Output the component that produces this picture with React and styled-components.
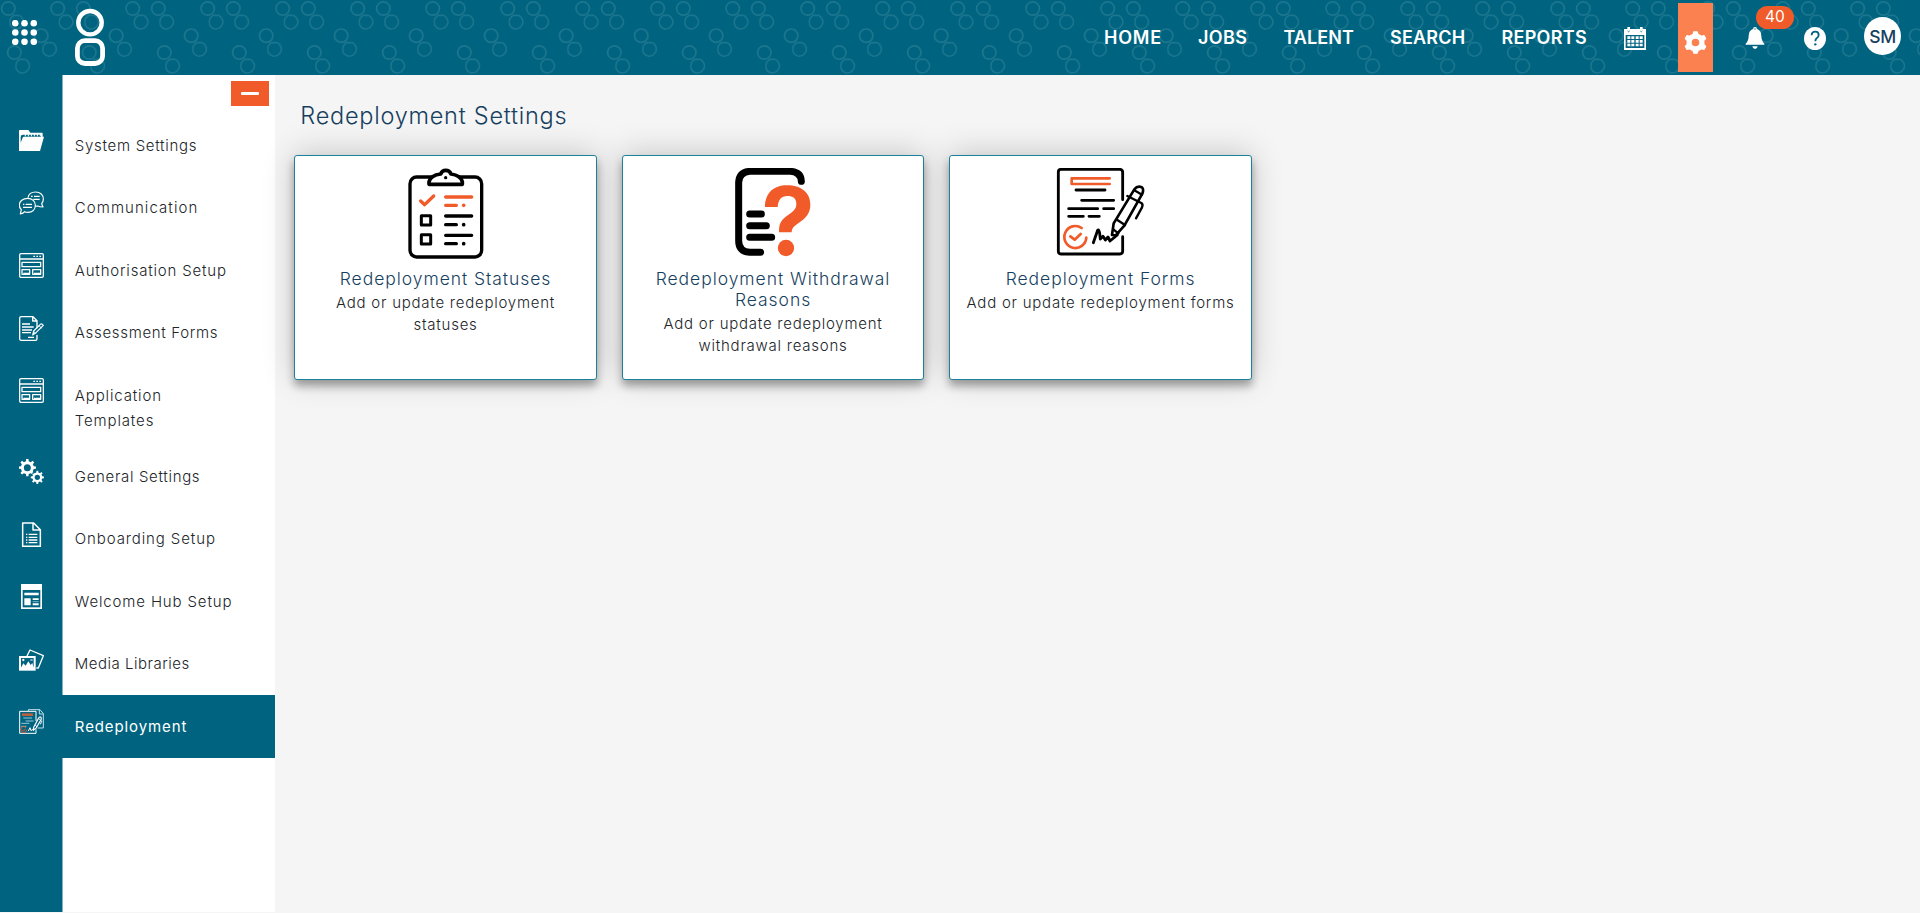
import React from "react";
import styled, { createGlobalStyle, css } from "styled-components";

const teal = "#006480";
const orange = "#f15a29";

const GlobalStyle = createGlobalStyle`
  *, *::before, *::after { box-sizing: border-box; }
  html, body { margin: 0; height: 100%; background: #f5f5f5; }
  body { font-family: Inter, "Liberation Sans", sans-serif; color: #212529; overflow: hidden; }
  svg { display: block; flex: none; }
`;

const Page = styled.div`
  display: flex;
  flex-direction: column;
  height: 912px;
`;

const Header = styled.header`
  position: relative;
  display: flex;
  align-items: flex-start;
  height: 75px;
  flex: none;
  background: ${teal};
  padding-left: 12px;
  padding-right: 19px;
`;

const HeaderPattern = styled.svg`
  position: absolute;
  inset: 0;
  width: 100%;
  height: 100%;
`;

const AppsButton = styled.a`
  position: relative;
  margin-top: 20px;
`;

const Logo = styled.a`
  position: relative;
  margin: 8px 0 0 38px;
`;

const Nav = styled.nav`
  position: relative;
  display: flex;
  flex: 1;
  justify-content: flex-end;
  gap: 36px;
  margin-right: 37px;
  padding-top: 25px;
`;

const NavLink = styled.a`
  font-size: 18px;
  line-height: 26px;
  font-weight: 600;
  color: #fff;
  letter-spacing: ${(p) => p.$spacing}px;
`;

const Tools = styled.div`
  position: relative;
  display: flex;
  align-items: flex-start;
`;

const Tool = styled.a`
  position: relative;
  display: flex;
  margin-top: 27px;
`;

const CalendarTool = styled(Tool)`
  margin-right: 32px;
`;

const BellTool = styled(Tool)`
  margin-right: 39px;
`;

const HelpTool = styled(Tool)`
  margin-right: 38px;
`;

const ActiveTool = styled.a`
  display: flex;
  justify-content: center;
  width: 35px;
  height: 69px;
  margin: 3px 32px 0 0;
  padding-top: 28px;
  background: #fb8151;
`;

const Badge = styled.span`
  position: absolute;
  left: 11px;
  top: -21px;
  width: 38px;
  height: 23px;
  border-radius: 12px;
  background: ${orange};
  color: #fff;
  font-size: 15.5px;
  line-height: 22px;
  text-align: center;
`;

const Avatar = styled.a`
  width: 37px;
  height: 38px;
  margin-top: 17px;
  border-radius: 50%;
  background: #fff;
  color: #173f5f;
  font-size: 17.5px;
  line-height: 40px;
  font-weight: 500;
  letter-spacing: -0.3px;
  text-align: center;
`;

const Body = styled.div`
  display: flex;
  flex: 1;
`;

const Sidebar = styled.aside`
  width: 275px;
  flex: none;
  background: linear-gradient(to right, ${teal} 62px, #7fb1bf 62px, #7fb1bf 63px, #fff 63px);
`;

const SidebarTop = styled.div`
  display: flex;
  justify-content: flex-end;
  height: 39px;
  padding: 6px 6px 0 0;
`;

const CollapseButton = styled.button`
  display: flex;
  align-items: center;
  justify-content: center;
  width: 38px;
  height: 25px;
  padding: 0;
  border: 0;
  background: ${orange};

  &::before {
    content: "";
    width: 18px;
    height: 3px;
    border-radius: 1px;
    background: #fff;
  }
`;

const Menu = styled.ul`
  margin: 0;
  padding: 0;
  list-style: none;
`;

const MenuItem = styled.li`
  display: flex;
  align-items: flex-start;
  height: ${(p) => (p.$tall ? 81 : 62.5)}px;
  ${(p) =>
    p.$active &&
    css`
      background: ${teal};
      color: #fff;
      font-weight: 400;
    `}
`;

const MenuIcon = styled.span`
  width: 62.5px;
  flex: none;
  padding: 14px 0 0 19px;
`;

const MenuLabel = styled.span`
  flex: 1;
  padding: 18.75px 10px 0 12.3px;
  font-size: 15px;
  line-height: 25px;
  font-weight: ${(p) => (p.$active ? 400 : 300)};
  letter-spacing: ${(p) => p.$spacing}px;
  white-space: pre-line;
`;

const Main = styled.main`
  flex: 1;
  padding: 26px 19px 0 19.3px;
`;

const PageTitle = styled.h1`
  margin: 0 0 24px 6px;
  font-size: 23.5px;
  line-height: 30px;
  font-weight: 300;
  letter-spacing: 0.75px;
  color: #173f5f;
`;

const Cards = styled.div`
  display: grid;
  grid-template-columns: repeat(3, 302.5px);
  gap: 25px;
`;

const Card = styled.a`
  display: flex;
  flex-direction: column;
  align-items: center;
  height: 225px;
  padding: 12px 8px;
  border: 1px solid #1c819b;
  border-radius: 3px;
  background: #fff;
  box-shadow: 0 6px 8px rgba(0, 0, 0, 0.33), 0 -2px 32px rgba(0, 0, 0, 0.19);
  text-align: center;
`;

const CardTitle = styled.h2`
  margin: 9px 0 3px;
  font-size: 17.5px;
  line-height: 21px;
  font-weight: 300;
  letter-spacing: 0.95px;
  color: #173f5f;
  white-space: pre-line;
`;

const CardText = styled.p`
  margin: 0;
  font-size: 15px;
  line-height: 22px;
  font-weight: 300;
  letter-spacing: 0.76px;
  white-space: pre-line;
`;

const squarish = "M-3.5 -7.2 L1.5 -7.4 Q3.5 -7.4 5 -5.6 L7 -2.5 Q7.8 0 6.8 2.5 L4 6 Q1 7.8 -2 7.3 Q-5.5 6.4 -7 3 Q-7.8 -1 -6.6 -4 Z";

function RingsPattern() {
  const pairs = [[8.3, 8.5], [57.7, 8.5], [41.2, 35.7], [14.3, 52.5]];
  return (
    <HeaderPattern aria-hidden="true">
      <defs>
        <pattern id="rings" width="75" height="75" patternUnits="userSpaceOnUse">
          <g fill="none" stroke="#fff" strokeOpacity="0.11" strokeWidth="1.7">
            {pairs.map(([x, y]) => (
              <g key={x}>
                <circle cx={x} cy={y} r="6.7" />
                <path d={squarish} transform={`translate(${x + 8.4} ${y + 13.6}) scale(.93)`} />
              </g>
            ))}
            <path d={squarish} transform="translate(-8.9 22.1) scale(.93)" />
          </g>
        </pattern>
      </defs>
      <rect width="100%" height="100%" fill="url(#rings)" />
    </HeaderPattern>
  );
}

function gearPath(cx, cy, outer, inner, teeth, wide = 0.27, narrow = 0.17) {
  const step = (Math.PI * 2) / teeth;
  const pts = [];
  for (let i = 0; i < teeth; i++) {
    const a = i * step - Math.PI / 2;
    [[-wide, inner], [-narrow, outer], [narrow, outer], [wide, inner]].forEach(([f, r]) => {
      pts.push(`${(cx + Math.cos(a + f * step) * r).toFixed(2)} ${(cy + Math.sin(a + f * step) * r).toFixed(2)}`);
    });
  }
  return `M${pts.join("L")}Z`;
}

function circlePath(cx, cy, r) {
  return `M${cx - r} ${cy}a${r} ${r} 0 1 0 ${2 * r} 0a${r} ${r} 0 1 0 ${-2 * r} 0Z`;
}

const Glyph = ({ children }) => (
  <svg width="25" height="25" viewBox="0 0 75 75" fill="none" stroke="#fff" strokeWidth="4" strokeLinejoin="round">
    {children}
  </svg>
);

const FolderIcon = () => (
  <Glyph>
    <path d="M0 8Q0 6 2 6H28L34 14H69Q71 14 71 17V26H75L63 69H0Z" fill="#fff" stroke="none" />
    <path d="M12 27L5 44V27Q5 20 12 20H66V26H15Q13 26 12 27Z" fill={teal} stroke="none" />
    <path d="M19 17V25M28 17V25M37 17V25M46 17V25M55 17V25M64 17V25" strokeWidth="3" />
  </Glyph>
);

const ChatIcon = () => (
  <Glyph>
    <g strokeWidth="3.5">
      <path d="M27 20C29 8 37 3 50 3C64 3 73 12 73 24C73 31 71 35 68 38L72 48C64 48 60 47 56 45L49 46" />
      <path d="M26 22C40 22 49 31 49 43C49 56 40 64 27 64C22 64 20 64 17 62C14 66 10 68 4 69L7 56C3 52 1 48 1 42C1 30 12 22 26 22Z" />
      <path d="M36 16H41M45 16H62M43 25H62M12 40H16M20 40H39M12 49H39" />
    </g>
  </Glyph>
);

const FormLayoutIcon = () => (
  <Glyph>
    <g strokeWidth="3.8">
      <rect x="2" y="2" width="71" height="71" rx="4" />
      <path d="M2 18H73M43 10H48M52 10H57M61 10H66" />
      <rect x="9" y="28" width="56" height="13" />
      <rect x="9" y="50" width="23" height="14" />
      <rect x="41" y="50" width="24" height="14" />
      <path d="M13 62H31M45 62H64" strokeWidth="5" />
    </g>
  </Glyph>
);

const AssessmentIcon = () => (
  <Glyph>
    <path d="M54 37V14L42 2H7Q2 2 2 7V68Q2 73 7 73H49Q54 73 54 68V57M41 2V15H54" />
    <path d="M9 24H33M9 33H44M9 42H39M9 50H36M27 64H45" />
    <path d="M41 57L44 45L64 25Q67 22 70 25L73 28L51 50Z" strokeWidth="3.5" />
    <path d="M60 29L68 37M44 46L50 52" strokeWidth="3" />
  </Glyph>
);

const GearsIcon = () => (
  <Glyph>
    <path
      fill="#fff"
      stroke="none"
      fillRule="evenodd"
      d={`${gearPath(25, 26, 26, 19.5, 8)}${circlePath(25, 26, 10.5)}${gearPath(55, 55, 20, 15, 8)}${circlePath(55, 55, 8)}`}
    />
  </Glyph>
);

const DocumentIcon = () => (
  <Glyph>
    <path d="M11 3H44L64 23V73H11ZM42 3V24H64" strokeWidth="4.5" />
    <path d="M21 37H25M29 37H55M21 46H25M29 46H55M21 54H25M29 54H55M21 62H25M29 62H55" strokeWidth="3.8" />
  </Glyph>
);

const WelcomeIcon = () => (
  <Glyph>
    <path d="M6 0H69V75H6Z" fill="#fff" stroke="none" />
    <path d="M11 18H64V70H11Z" fill={teal} stroke="none" />
    <path d="M16 26H59V34H16ZM16 43H35V64H16ZM41 43H59V48H41ZM41 58H59V64H41Z" fill="#fff" stroke="none" />
    <path d="M41 53H59" strokeWidth="3" strokeOpacity="0.5" />
  </Glyph>
);

const MediaIcon = () => (
  <Glyph>
    <path d="M24 27L33 9L73 26L58 63H52" />
    <path d="M0 27H50V71H0Z" fill="#fff" stroke="none" />
    <path d="M6 33H44V62L40 48L35 54L28 43L20 56L13 49L6 62Z" fill={teal} stroke="none" />
    <circle cx="13" cy="39" r="3.5" fill="#fff" stroke="none" />
    <path d="M34 39H41" strokeWidth="3" />
  </Glyph>
);

const RedeploymentIcon = () => (
  <Glyph>
    <path d="M28 6V2H63L73 14V57H56M61 3V15H73" stroke="#bfe0ea" strokeWidth="3" />
    <path d="M51 36V7H2V73H51V61" strokeWidth="3" />
    <path d="M9 17H42" stroke="#b9603f" strokeWidth="8" />
    <path d="M13 27H39M20 36H44M7 43H31M7 52H22" stroke="#b8dce6" strokeWidth="2.5" />
    <path d="M21 56A9 9 0 1 0 23 63M9 62L13 66L20 60" stroke="#e15d35" strokeWidth="3" />
    <path d="M28 66L33 56L36 65L41 61L44 66" strokeWidth="3" />
    <path d="M44 55L59 27Q62 22 66 25Q68 27 66 32L51 58L43 63Z" strokeWidth="3.5" />
    <path d="M59 28L68 37L64 46M49 49L54 53" strokeWidth="3" />
  </Glyph>
);

const StatusesArt = () => (
  <svg width="90" height="91" viewBox="362 233 270 273" fill="none" strokeLinecap="round" strokeLinejoin="round">
    <g stroke="#000">
      <rect x="389" y="260" width="215" height="240" rx="20" strokeWidth="10" fill="#fff" />
      <path d="M446 282V274Q451 255 481 251Q485 240 496 240Q508 240 512 251Q541 255 546 274V282Z" strokeWidth="11" fill="#fff" />
      <rect x="423" y="376" width="28" height="28" strokeWidth="9" />
      <rect x="423" y="433" width="28" height="28" strokeWidth="9" />
      <path d="M496 377H574M496 403H528M496 435H574M496 460H528" strokeWidth="10" />
    </g>
    <circle cx="496" cy="262" r="5" fill="#000" />
    <circle cx="550" cy="403" r="5.5" fill="#000" />
    <circle cx="550" cy="460" r="5.5" fill="#000" />
    <path d="M421 332L433 343L460 317M496 320H574M496 345H528" stroke={orange} strokeWidth="10" />
    <circle cx="550" cy="345" r="5.5" fill={orange} />
  </svg>
);

const ReasonsArt = () => (
  <svg width="90" height="91" viewBox="354 84 270 273" fill="none" strokeLinecap="round">
    <path
      d="M452 337H419Q386 334 386 302V127Q388 96 419 94H541Q573 96 574 124M419 222H454M419 257H469M419 292H485"
      stroke="#000"
      strokeWidth="21"
    />
    <path
      d="M465 201C465 159 491 136 531 136C574 136 601 158 601 194C601 221 586 235 567 248C551 259 546 263 545 277H507C507 251 512 242 530 228C549 214 559 209 559 192C559 175 549 168 532 168C514 168 505 179 503 201Z"
      fill={orange}
    />
    <circle cx="528" cy="324" r="24.5" fill={orange} />
  </svg>
);

const FormsArt = () => (
  <svg width="90" height="91" viewBox="378 84 270 273" fill="none" strokeLinecap="round" strokeLinejoin="round">
    <path d="M578 179V96Q577 88 569 88H393Q385 88 385 96V334Q385 342 393 342H569Q578 342 578 334V290" stroke="#000" strokeWidth="8.5" />
    <g stroke="#000" strokeWidth="8.5">
      <path d="M438 150H525M455 181H551M416 206H503M521 206H551M416 229H460M477 229H508" />
      <path d="M490 308L503 271Q507 267 509 280L511 297L519 289L526 300L534 291L540 303L562 285" />
      <path d="M546 285L551 250L613 148Q623 135 636 142Q642 148 637 161L583 257L557 286Z" strokeWidth="8" />
      <path d="M592 168L634 189Q640 193 636 202L618 235M613 151L636 164M562 240L585 255M550 268L565 280" strokeWidth="7" />
    </g>
    <path d="M539 115H425V132H539" stroke={orange} strokeWidth="8" />
    <path d="M455 264A33 33 0 1 0 469 293M421 289L434 299L452 282" stroke={orange} strokeWidth="8" />
  </svg>
);

const navLinks = [
  { label: "HOME", spacing: 0.8 },
  { label: "JOBS", spacing: 0.4 },
  { label: "TALENT", spacing: 0.08 },
  { label: "SEARCH", spacing: 0.23 },
  { label: "REPORTS", spacing: 0.3 },
];

const menu = [
  { label: "System Settings", icon: FolderIcon, spacing: 0.71 },
  { label: "Communication", icon: ChatIcon, spacing: 1.07 },
  { label: "Authorisation Setup", icon: FormLayoutIcon, spacing: 0.81 },
  { label: "Assessment Forms", icon: AssessmentIcon, spacing: 0.68 },
  { label: "Application\nTemplates", icon: FormLayoutIcon, spacing: 0.86, tall: true },
  { label: "General Settings", icon: GearsIcon, spacing: 0.68 },
  { label: "Onboarding Setup", icon: DocumentIcon, spacing: 0.89 },
  { label: "Welcome Hub Setup", icon: WelcomeIcon, spacing: 0.86 },
  { label: "Media Libraries", icon: MediaIcon, spacing: 0.51 },
  { label: "Redeployment", icon: RedeploymentIcon, spacing: 0.9, active: true },
];

const cards = [
  { title: "Redeployment Statuses", text: "Add or update redeployment\nstatuses", art: StatusesArt },
  { title: "Redeployment Withdrawal\nReasons", text: "Add or update redeployment\nwithdrawal reasons", art: ReasonsArt },
  { title: "Redeployment Forms", text: "Add or update redeployment forms", art: FormsArt },
];

export default function App() {
  return (
    <>
      <GlobalStyle />
      <Page>
        <Header>
          <RingsPattern />
          <AppsButton aria-label="Apps">
            <svg width="25" height="25" fill="#fff">
              {[3.2, 12.5, 21.8].map((y) => [3.2, 12.5, 21.8].map((x) => <circle key={`${x}-${y}`} cx={x} cy={y} r="3.3" />))}
            </svg>
          </AppsButton>
          <Logo aria-label="Home">
            <svg width="30" height="58" viewBox="0 0 30 58" fill="none" stroke="#fff">
              <circle cx="15" cy="14.7" r="11.7" strokeWidth="4.4" />
              <rect x="2.4" y="32.7" width="25.2" height="22.8" rx="7.5" strokeWidth="4.8" />
            </svg>
          </Logo>
          <Nav>
            {navLinks.map((link) => (
              <NavLink key={link.label} $spacing={link.spacing}>{link.label}</NavLink>
            ))}
          </Nav>
          <Tools>
            <CalendarTool aria-label="Calendar">
              <svg width="22" height="23" viewBox="0 0 66 69">
                <path
                  fill="#fff"
                  fillRule="evenodd"
                  d="M0 6H10V0H18V6H48V0H56V6H66V69H0ZM5 24V63H61V24Z"
                />
                <path d="M11 12Q14 17 17 12M49 12Q52 17 55 12" stroke={teal} strokeWidth="2.5" fill="none" />
                <path
                  fill="#fff"
                  d="M10 28h9v8h-9zM22 28h9v8h-9zM35 28h9v8h-9zM47 28h9v8h-9zM10 39h9v8h-9zM22 39h9v8h-9zM35 39h9v8h-9zM47 39h9v8h-9zM10 50h9v8h-9zM22 50h9v8h-9zM35 50h9v8h-9zM47 50h9v8h-9z"
                />
              </svg>
            </CalendarTool>
            <ActiveTool aria-label="Settings">
              <svg width="23" height="23" viewBox="0 0 69 69">
                <path
                  fill="#fff"
                  stroke="#fff"
                  strokeWidth="4"
                  strokeLinejoin="round"
                  fillRule="evenodd"
                  d={`${gearPath(34.5, 34.5, 32.5, 25.5, 6, 0.27, 0.15)}${circlePath(34.5, 34.5, 13.5)}`}
                />
              </svg>
            </ActiveTool>
            <BellTool aria-label="Notifications">
              <svg width="20" height="23" viewBox="0 0 60 69" fill="#fff">
                <path d="M30 0Q36 0 36 6Q49 10 49 27Q49 42 58 50V53H2V50Q11 42 11 27Q11 10 24 6Q24 0 30 0ZM22 58H38Q37 66 30 66Q23 66 22 58Z" />
                <circle cx="30" cy="6" r="2" fill={teal} />
              </svg>
              <Badge>40</Badge>
            </BellTool>
            <HelpTool aria-label="Help">
              <svg width="22" height="23" viewBox="0 0 66 69" fill="none">
                <ellipse cx="33" cy="34.5" rx="33" ry="34.5" fill="#fff" />
                <path d="M23 25Q23 14 34 14Q44 14 44 24Q44 30 38 34Q34 37 34 43" stroke={teal} strokeWidth="5.5" />
                <circle cx="34" cy="52" r="3.5" fill={teal} />
              </svg>
            </HelpTool>
            <Avatar>SM</Avatar>
          </Tools>
        </Header>
        <Body>
          <Sidebar>
            <SidebarTop>
              <CollapseButton aria-label="Collapse menu" />
            </SidebarTop>
            <Menu>
              {menu.map(({ label, icon: Icon, spacing, tall, active }) => (
                <MenuItem key={label} $tall={tall} $active={active}>
                  <MenuIcon><Icon /></MenuIcon>
                  <MenuLabel $spacing={spacing} $active={active}>{label}</MenuLabel>
                </MenuItem>
              ))}
            </Menu>
          </Sidebar>
          <Main>
            <PageTitle>Redeployment Settings</PageTitle>
            <Cards>
              {cards.map(({ title, text, art: Art }) => (
                <Card key={title}>
                  <Art />
                  <CardTitle>{title}</CardTitle>
                  <CardText>{text}</CardText>
                </Card>
              ))}
            </Cards>
          </Main>
        </Body>
      </Page>
    </>
  );
}
